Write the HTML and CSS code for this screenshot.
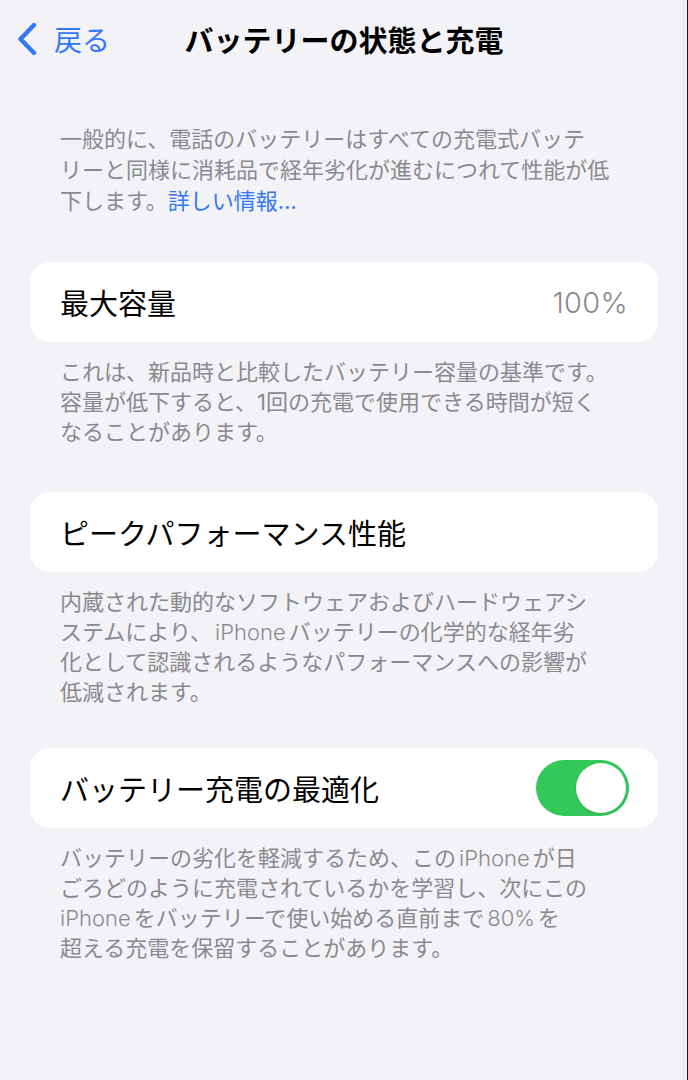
FILE: index.html
```html
<!DOCTYPE html>
<html lang="ja">
<head>
<meta charset="utf-8">
<title>バッテリーの状態と充電</title>
<link rel="stylesheet" href="styles.css">
</head>
<body>
<div class="screen">
  <header class="nav">
    <a class="back" href="#">
      <svg class="chev" width="24" height="34" viewBox="0 0 24 34"><path d="M19 3 L5.5 17 L19 31" fill="none" stroke="#3478F6" stroke-width="4.4" stroke-linecap="round" stroke-linejoin="round"/></svg>
      <span>戻る</span>
    </a>
    <h1 class="title">バッテリーの状態と充電</h1>
    <div></div>
  </header>

  <p class="intro">一般的に、電話のバッテリーはすべての充電式バッテ<br>リーと同様に消耗品で経年劣化が進むにつれて性能が低<br>下します。<a class="link" href="#">詳しい情報...</a></p>

  <section class="group">
    <div class="card">
      <span class="label">最大容量</span>
      <span class="value">100%</span>
    </div>
    <p class="note">これは、新品時と比較したバッテリー容量の基準です。<br>容量が低下すると、1回の充電で使用できる時間が短く<br>なることがあります。</p>
  </section>

  <section class="group">
    <div class="card">
      <span class="label">ピークパフォーマンス性能</span>
    </div>
    <p class="note">内蔵された動的なソフトウェアおよびハードウェアシ<br>ステムにより、<span class="lat">iPhone</span>バッテリーの化学的な経年劣<br>化として認識されるようなパフォーマンスへの影響が<br>低減されます。</p>
  </section>

  <section class="group last">
    <div class="card">
      <span class="label">バッテリー充電の最適化</span>
      <span class="toggle"><span class="knob"></span></span>
    </div>
    <p class="note">バッテリーの劣化を軽減するため、この<span class="lat">iPhone</span>が日<br>ごろどのように充電されているかを学習し、次にこの<br><span class="lat first">iPhone</span>をバッテリーで使い始める直前まで<span class="lat">80%</span>を<br>超える充電を保留することがあります。</p>
  </section>
</div>
</body>
</html>
```

FILE: styles.css
```css
* { box-sizing: border-box; }
html, body { margin: 0; padding: 0; }
body {
  background: #f2f2f7;
  font-family: "Inter", "Noto Sans CJK JP", sans-serif;
  color: #000;
}
.screen {
  width: 688px;
  min-height: 1080px;
  background: #f2f2f7;
  box-shadow: inset -1px 0 0 #1a1a1a, inset -4px 0 0 #f2f2f7, inset -5px 0 0 #e2e2e8;
  display: flex;
  flex-direction: column;
}
.nav {
  height: 78px;
  display: grid;
  grid-template-columns: 1fr auto 1fr;
  align-items: center;
}
.back {
  display: flex;
  align-items: center;
  gap: 15px;
  padding-left: 15px;
  color: #3478F6;
  text-decoration: none;
  font-size: 28px;
  font-family: "Noto Sans CJK JP", sans-serif;
}
.chev { display: block; }
.title {
  margin: 0;
  font-size: 29px;
  font-weight: 700;
  font-family: "Noto Sans CJK JP", sans-serif;
}
.intro {
  margin: 46px 0 0;
  padding: 0 40px 0 60px;
  font-size: 22px;
  line-height: 31px;
  color: #8a8a8e;
  white-space: nowrap;
}
.link { color: #3478F6; text-decoration: none; }
.group {
  margin-top: 45px;
  padding: 0 30px;
}
.group.last { margin-top: 41px; }
.card {
  height: 80px;
  background: #fff;
  border-radius: 20px;
  display: flex;
  align-items: center;
  justify-content: space-between;
  padding: 0 30px;
}
.label {
  font-size: 29px;
  font-family: "Noto Sans CJK JP", sans-serif;
}
.value {
  font-size: 29px;
  font-weight: 300;
  color: #8a8a8e;
  letter-spacing: 0.3px;
}
.toggle {
  width: 93px;
  height: 56px;
  border-radius: 28px;
  background: #34c759;
  display: flex;
  align-items: center;
  justify-content: flex-end;
  padding: 3px;
  margin-right: -1px;
}
.knob {
  width: 50px;
  height: 50px;
  border-radius: 50%;
  background: #fff;
  box-shadow: 0 1px 3px rgba(0,0,0,0.12);
}
.note {
  margin: 15px 0 0;
  padding: 0 30px;
  font-size: 22px;
  line-height: 30px;
  color: #8a8a8e;
  white-space: nowrap;
}
.lat { margin: 0 3px; font-weight: 300; }
.lat.first { margin-left: 0; }
```
